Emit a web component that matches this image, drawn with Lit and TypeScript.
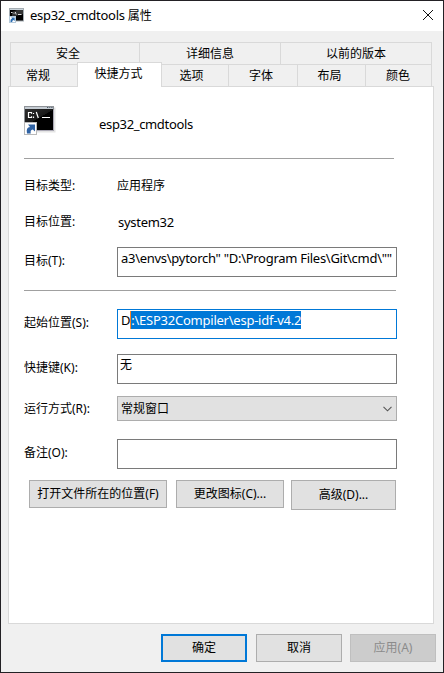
import { LitElement, html, css, svg } from "lit";
import { customElement, property } from "lit/decorators.js";

@customElement("console-icon")
class ConsoleIcon extends LitElement {
  @property({ type: Boolean }) small = false;

  static styles = css`
    :host { display: block; flex: none; }
    svg { display: block; }
  `;

  private arrow = svg`
    <rect x="0.5" y="16.5" width="12" height="12" fill="#fff" stroke="#b9b9b9"/>
    <path d="M3 27.5C2.2 23.5 3.2 21.3 6 21L4 18.5H11V25.5L8.8 23.6C6.8 24 6.2 25.4 6.8 27.5Z" fill="#2f62a3"/>`;

  render() {
    if (this.small) {
      return html`<svg width="16" height="16" viewBox="0 0 16 16">
        <rect x="0.5" y="0.5" width="14" height="12.5" fill="#000" stroke="#a5adb3"/>
        <path d="M1 1.5H14" stroke="#c9d3da"/>
        <path d="M8 2H14V6L3 9V4Z" fill="#333"/>
        <path d="M2 4.5H3.5M4.5 5.2H5.5M6.3 4L7.2 6.5M9 6.5H12.5" stroke="#ddd"/>
        <rect x="0.5" y="8.5" width="6" height="6" fill="#fff" stroke="#b5cadb"/>
        <path d="M1.5 14V12.5Q1.5 11 3 10.8L2.3 9.5H5.7V13L4.5 12Q3 12.3 3.2 14Z" fill="#2b6cb0"/>
      </svg>`;
    }
    return html`<svg width="32" height="30" viewBox="0 0 32 30">
      <defs>
        <linearGradient id="shine" x1="0" y1="0" x2="0.7" y2="1">
          <stop offset="0" stop-color="#333"/><stop offset="0.55" stop-color="#171717"/>
          <stop offset="0.56" stop-color="#000"/><stop offset="1" stop-color="#000"/>
        </linearGradient>
      </defs>
      <rect x="1.5" y="1.5" width="30" height="25" fill="#e4e4e4"/>
      <rect x="0.5" y="0.5" width="29" height="24" fill="url(#shine)" stroke="#8e9297"/>
      <rect x="1" y="1" width="28" height="2" fill="#c5ccd3"/>
      <path d="M23 1.5H24.3M25.3 1.5H26.3M27.3 1.5H28.5" stroke="#4c5965"/>
      <path d="M29.5 4V24.5H13" fill="none" stroke="#aaa8b4"/>
      <path d="M7.5 7.8V6.5H4.5V11.5H7.5V10.2M9.5 7V8M9.5 10.5V12M12.3 6L14.3 12M18 11.5H26" fill="none" stroke="#fff" stroke-width="1.2"/>
      ${this.arrow}
    </svg>`;
  }
}

@customElement("push-button")
class PushButton extends LitElement {
  static properties = { kind: { type: String, reflect: true } };
  static styles = css`
    :host {
      display: flex; align-items: center; justify-content: center;
      box-sizing: border-box; height: 28px; flex: none;
      background: #e1e1e1; border: 1px solid #adadad; white-space: nowrap;
    }
    :host([kind="default"]) { border: 2px solid #0078d7; }
    :host([kind="disabled"]) { background: #ccc; border-color: #bfbfbf; color: #8b8b8b; }
  `;
  render() { return html`<slot></slot>`; }
}

@customElement("app-root")
class AppRoot extends LitElement {
  static styles = css`
    :host {
      display: flex; flex-direction: column; box-sizing: border-box;
      width: 444px; height: 673px; border: 1px solid #232125;
      background: #f0f0f0; color: #000; overflow: hidden;
      font: 12px/16px "Noto Sans", "Noto Sans CJK SC", sans-serif;
    }
    .title { display: flex; align-items: center; height: 30px; background: #fff; flex: none; padding: 0 8px; }
    .title .caption { flex: 1; margin: 0 0 1px 5px; }
    .close { display: block; margin: 0 1px 2px 0; }
    .latin { font-size: 13px; letter-spacing: -0.28px; }
    .tabs { display: flex; flex: none; margin-left: 9px; width: 422px; box-sizing: border-box; height: 22px; border-left: 1px solid #d9d9d9; }
    .tabs.back { margin-top: 11px; }
    .tab { box-sizing: border-box; border: solid #d9d9d9; border-width: 1px 1px 0 0; display: flex; justify-content: center; align-items: center; height: 22px; }
    .tab.active { height: 25px; margin: -2px 0 0 -1px; padding: 0 2px 2px 0; border-left-width: 1px; background: #fff; position: relative; z-index: 1; }
    .w129 { width: 129px; padding-right: 14px; }
    .w141 { width: 141px; }
    .w151 { width: 151px; }
    .w67 { width: 67px; padding-right: 12px; }
    .w85 { width: 85px; }
    .w67b { width: 67px; padding-right: 7px; }
    .w69 { width: 69px; padding-right: 4px; }
    .w68 { width: 68px; padding-right: 4px; }
    .w66b { width: 66px; padding-right: 1px; }
    .page { box-sizing: border-box; width: 426px; height: 538px; flex: none; margin-left: 7px; padding: 19px 0 0 15px; background: #fff; border: 1px solid #d9d9d9; }
    .identity { display: flex; height: 52px; align-items: flex-start; }
    .identity .latin { margin: 10px 0 0 43px; letter-spacing: -0.34px; }
    .rule { height: 1px; background: #a0a0a0; width: 370px; }
    .rule.wide { width: 372px; margin: 13px 0 18px; }
    .row { display: grid; grid-template-columns: 93px 280px; align-items: center; }
    .row > span:first-child { padding-bottom: 2px; }
    .type { height: 37px; margin-top: 9px; }
    .type > span { padding-bottom: 2px; }
    .location { height: 36px; margin-bottom: 6px; }
    .location .latin { padding: 0 0 2px 1px; }
    .field { box-sizing: border-box; height: 30px; border: 1px solid #7a7a7a; padding: 2px 0 0 3px; white-space: nowrap; overflow: hidden; }
    .field.plain { padding-left: 2px; }
    .field.focus { border-color: #0078d7; letter-spacing: -0.24px; }
    .gap { margin-bottom: 15px; }
    .gap-small { margin-bottom: 12px; }
    .gap-large { margin-bottom: 18px; }
    .gap-large > span:first-child { padding-bottom: 0; }
    .picked { background: #0078d7; color: #fff; border-left: 1px solid #ff8728; }
    .select { box-sizing: border-box; height: 25px; border: 1px solid #adadad; background: #e1e1e1; display: flex; align-items: center; justify-content: space-between; padding: 0 4px 0 3px; }
    .actions { display: flex; align-items: flex-start; margin: 11px 0 0 5px; }
    .open { width: 138px; }
    .change { width: 108px; margin-left: 9px; }
    .advanced { width: 105px; height: 30px; margin-left: 7px; }
    .footer { display: flex; justify-content: flex-end; gap: 8px; margin: 10px 7px 0 0; }
    .footer push-button { width: 86px; }
    .footer .ok { margin-right: 1px; }
  `;

  render() {
    return html`
      <div class="title">
        <console-icon small></console-icon>
        <span class="caption"><span class="latin">esp32_cmdtools</span> 属性</span>
        <svg class="close" width="12" height="12" viewBox="0 0 12 12"><path d="M1 1L11 11M11 1L1 11" stroke="#111" fill="none"/></svg>
      </div>
      <div class="tabs back">
        <div class="tab w129">安全</div><div class="tab w141">详细信息</div><div class="tab w151">以前的版本</div>
      </div>
      <div class="tabs">
        <div class="tab w67">常规</div><div class="tab active w85">快捷方式</div><div class="tab w67b">选项</div>
        <div class="tab w69">字体</div><div class="tab w68">布局</div><div class="tab w66b">颜色</div>
      </div>
      <div class="page">
        <div class="identity"><console-icon></console-icon><span class="latin">esp32_cmdtools</span></div>
        <div class="rule"></div>
        <div class="row type"><span>目标类型:</span><span>应用程序</span></div>
        <div class="row location"><span>目标位置:</span><span class="latin">system32</span></div>
        <div class="row"><span>目标(T):</span><div class="field latin">a3\\envs\\pytorch" "D:\\Program Files\\Git\\cmd\\""</div></div>
        <div class="rule wide"></div>
        <div class="row gap"><span>起始位置(S):</span><div class="field focus latin">D<span class="picked">:\\ESP32Compiler\\esp-idf-v4.2</span></div></div>
        <div class="row gap-small"><span>快捷键(K):</span><div class="field plain">无</div></div>
        <div class="row gap-large"><span>运行方式(R):</span>
          <div class="select"><span>常规窗口</span><svg width="9" height="6" viewBox="0 0 9 6"><path d="M0.5 0.8L4.5 4.8L8.5 0.8" fill="none" stroke="#555" stroke-width="1.1"/></svg></div>
        </div>
        <div class="row"><span>备注(O):</span><div class="field"></div></div>
        <div class="actions">
          <push-button class="open">打开文件所在的位置(F)</push-button>
          <push-button class="change">更改图标(C)...</push-button>
          <push-button class="advanced">高级(D)...</push-button>
        </div>
      </div>
      <div class="footer">
        <push-button class="ok" kind="default">确定</push-button>
        <push-button>取消</push-button>
        <push-button kind="disabled">应用(A)</push-button>
      </div>
    `;
  }
}
